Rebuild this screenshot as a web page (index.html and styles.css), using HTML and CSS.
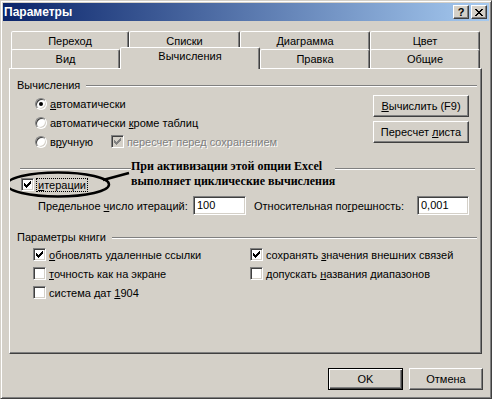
FILE: index.html
```html
<!DOCTYPE html>
<html lang="ru">
<head>
    <meta charset="UTF-8">
    <title>Параметры</title>
    <link rel="stylesheet" href="styles.css">
</head>
<body>
    <div class="window">
        <div class="titlebar">
            <span class="title">Параметры</span>
            <div class="caption-buttons">
                <span class="caption-btn">?</span>
                <span class="caption-btn">
                    <svg width="8" height="7" viewBox="0 0 8 7"><path d="M0 0h2v1h-2zM6 0h2v1h-2zM1 1h2v1h-2zM5 1h2v1h-2zM2 2h4v1h-4zM3 3h2v1h-2zM2 4h4v1h-4zM1 5h2v1h-2zM5 5h2v1h-2zM0 6h2v1h-2zM6 6h2v1h-2z"/></svg>
                </span>
            </div>
        </div>

        <div class="content">
            <div class="tab-row back">
                <div class="tab">Переход</div>
                <div class="tab">Списки</div>
                <div class="tab">Диаграмма</div>
                <div class="tab">Цвет</div>
            </div>
            <div class="tab-row front">
                <div class="tab">Вид</div>
                <div class="tab active">Вычисления</div>
                <div class="tab">Правка</div>
                <div class="tab">Общие</div>
            </div>

            <div class="panel">
                <div class="group-head">
                    <span>Вычисления</span>
                    <span class="etch"></span>
                </div>

                <div class="calc">
                    <div class="radios">
                        <div class="radio-row">
                            <span class="radio checked"><span class="dot"></span></span>
                            <span><u>а</u>втоматически</span>
                        </div>
                        <div class="radio-row">
                            <span class="radio"></span>
                            <span>автоматически <u>к</u>роме таблиц</span>
                        </div>
                        <div class="radio-row">
                            <span class="radio"></span>
                            <span>в<u>р</u>учную</span>
                            <span class="check disabled save-check">
                                <svg width="7" height="7" viewBox="0 0 7 7"><path d="M6 0h1v1h-1zM5 1h2v1h-2zM0 2h1v1h-1zM4 2h3v1h-3zM0 3h2v1h-2zM3 3h3v1h-3zM0 4h5v1h-5zM1 5h3v1h-3zM2 6h1v1h-1z"/></svg>
                            </span>
                            <span class="muted">пересчет перед сохранением</span>
                        </div>
                    </div>
                    <div class="calc-buttons">
                        <div class="btn wide"><span><u>В</u>ычислить (F9)</span></div>
                        <div class="btn wide"><span>Пересчет <u>л</u>иста</span></div>
                    </div>
                </div>

                <div class="sep"></div>

                <div class="iter-row">
                    <span class="check">
                        <svg width="7" height="7" viewBox="0 0 7 7"><path d="M6 0h1v1h-1zM5 1h2v1h-2zM0 2h1v1h-1zM4 2h3v1h-3zM0 3h2v1h-2zM3 3h3v1h-3zM0 4h5v1h-5zM1 5h3v1h-3zM2 6h1v1h-1z"/></svg>
                    </span>
                    <span class="focus-label"><u>и</u>терации</span>
                </div>

                <div class="limits-row">
                    <span class="limit-label">Предельное <u>ч</u>исло итераций:</span>
                    <span class="field short">100</span>
                    <span class="limit-label second">Относительная по<u>г</u>решность:</span>
                    <span class="field right">0,001</span>
                </div>

                <div class="group-head book">
                    <span>Параметры книги</span>
                    <span class="etch"></span>
                </div>

                <div class="book-options">
                    <div class="check-row">
                        <span class="check">
                            <svg width="7" height="7" viewBox="0 0 7 7"><path d="M6 0h1v1h-1zM5 1h2v1h-2zM0 2h1v1h-1zM4 2h3v1h-3zM0 3h2v1h-2zM3 3h3v1h-3zM0 4h5v1h-5zM1 5h3v1h-3zM2 6h1v1h-1z"/></svg>
                        </span>
                        <span><u>о</u>бновлять удаленные ссылки</span>
                    </div>
                    <div class="check-row">
                        <span class="check">
                            <svg width="7" height="7" viewBox="0 0 7 7"><path d="M6 0h1v1h-1zM5 1h2v1h-2zM0 2h1v1h-1zM4 2h3v1h-3zM0 3h2v1h-2zM3 3h3v1h-3zM0 4h5v1h-5zM1 5h3v1h-3zM2 6h1v1h-1z"/></svg>
                        </span>
                        <span>сохранять <u>з</u>начения внешних связей</span>
                    </div>
                    <div class="check-row">
                        <span class="check"></span>
                        <span><u>т</u>очность как на экране</span>
                    </div>
                    <div class="check-row">
                        <span class="check"></span>
                        <span>допускать <u>н</u>азвания диапазонов</span>
                    </div>
                    <div class="check-row">
                        <span class="check"></span>
                        <span>система дат <u>1</u>904</span>
                    </div>
                </div>

                <!-- выноска поверх вкладки -->
                <svg class="callout-marks" width="140" height="140" viewBox="0 0 140 140">
                    <ellipse cx="48" cy="115.5" rx="51" ry="12" fill="none" stroke="#000" stroke-width="2.5"/>
                    <line x1="93" y1="111" x2="119" y2="104" stroke="#000" stroke-width="2.5"/>
                </svg>
                <div class="callout-text">При активизации этой опции Excel<br>выполняет циклические вычисления</div>
            </div>

            <div class="footer">
                <div class="btn default">OK</div>
                <div class="btn cancel">Отмена</div>
            </div>
        </div>
    </div>
</body>
</html>
```

FILE: styles.css
```css
* {
    box-sizing: border-box;
}
body {
    margin: 0;
    background-color: #d4d0c8;
    font-family: "Liberation Sans", Arial, sans-serif;
    font-size: 11px;
    color: #000;
}
u {
    text-decoration: underline;
    text-underline-offset: 1px;
}
.window {
    width: 492px;
    height: 399px;
    padding: 2px;
    background-color: #d4d0c8;
    border: 1px solid;
    border-color: #d4d0c8 #404040 #404040 #d4d0c8;
    box-shadow: inset 1px 1px #fff, inset -1px -1px #808080;
}
.titlebar {
    height: 18px;
    display: flex;
    align-items: center;
    padding: 0 2px 0 1px;
    background: linear-gradient(to right, #0a246a, #a6caf0);
}
.title {
    flex: 1;
    color: #fff;
    font-weight: bold;
    font-size: 12px;
}
.caption-buttons {
    display: flex;
    gap: 2px;
}
.caption-btn {
    width: 16px;
    height: 14px;
    display: flex;
    align-items: center;
    justify-content: center;
    background-color: #d4d0c8;
    border: 1px solid;
    border-color: #fff #404040 #404040 #fff;
    box-shadow: inset -1px -1px #808080;
    font-weight: bold;
    font-size: 11px;
    line-height: 1;
}
.content {
    padding: 10px 7px 0 6px;
}

/* вкладки */
.tab-row {
    display: flex;
    height: 19px;
    margin-left: 2px;
}
.tab-row.front {
    margin-top: -1px;
}
.tab {
    padding-top: 1px;
    text-align: center;
    line-height: 17px;
    background-color: #d4d0c8;
    border: 1px solid;
    border-bottom: none;
    border-color: #fff #404040 transparent #fff;
    border-radius: 2px 2px 0 0;
    box-shadow: inset -1px 0 #808080;
}
.back .tab:nth-child(1) { width: 118px; }
.back .tab:nth-child(2) { width: 111px; }
.back .tab:nth-child(3) { width: 130px; }
.back .tab:nth-child(4) { width: 110px; }
.front .tab:nth-child(1) { width: 109px; }
.front .tab:nth-child(2) { width: 140px; }
.front .tab:nth-child(3) { width: 110px; }
.front .tab:nth-child(4) { width: 110px; }
.tab.active {
    position: relative;
    z-index: 1;
    margin-top: -2px;
    margin-bottom: -1px;
    padding-top: 0;
}

/* панель */
.panel {
    position: relative;
    height: 286px;
    padding: 9px 4px 0 7px;
    border: 1px solid;
    border-color: #fff #404040 #404040 #fff;
    box-shadow: inset -1px -1px #808080;
}
.group-head {
    display: flex;
    align-items: center;
    height: 14px;
}
.group-head.book {
    margin-top: 15px;
}
.etch {
    flex: 1;
    height: 2px;
    margin: 2px 0 0 6px;
    border-top: 1px solid #808080;
    border-bottom: 1px solid #fff;
}
.calc {
    display: flex;
    margin-top: 2px;
}
.radios {
    margin-left: 18px;
}
.radio-row {
    display: flex;
    align-items: center;
    gap: 3px;
    height: 19px;
}
.radio {
    width: 12px;
    height: 12px;
    display: flex;
    align-items: center;
    justify-content: center;
    border-radius: 50%;
    background-color: #fff;
    border: 1px solid;
    border-color: #808080 #fff #fff #808080;
    box-shadow: inset 1px 1px #404040, inset -1px -1px #d4d0c8;
}
.dot {
    width: 4px;
    height: 4px;
    border-radius: 50%;
    background-color: #000;
}
.check {
    width: 13px;
    height: 13px;
    flex: none;
    background-color: #fff;
    border: 1px solid;
    border-color: #808080 #fff #fff #808080;
    box-shadow: inset 1px 1px #404040, inset -1px -1px #d4d0c8;
}
.check svg {
    display: block;
    margin: 2px;
}
.check.disabled {
    background-color: #d4d0c8;
    fill: #808080;
}
.save-check {
    margin-left: 15px;
}
.muted {
    color: #808080;
    text-shadow: 1px 1px #fff;
}
.calc-buttons {
    margin: 1px 8px 0 auto;
    display: flex;
    flex-direction: column;
    gap: 4px;
}
.btn {
    height: 22px;
    display: flex;
    align-items: center;
    justify-content: center;
    background-color: #d4d0c8;
    border: 1px solid;
    border-color: #fff #404040 #404040 #fff;
    box-shadow: inset -1px -1px #808080;
}
.btn.wide {
    width: 96px;
}
.sep {
    height: 2px;
    margin: 17px 2px 0 3px;
    border-top: 1px solid #808080;
    border-bottom: 1px solid #fff;
}
.iter-row {
    display: flex;
    align-items: center;
    gap: 2px;
    height: 17px;
    margin: 6px 0 0 4px;
}
.focus-label {
    padding: 0 1px;
    line-height: 12px;
    border: 1px dotted #000;
}
.limits-row {
    display: flex;
    align-items: center;
    height: 19px;
    margin-top: 3px;
}
.limit-label {
    width: 155px;
    margin-left: 21px;
}
.limit-label.second {
    width: auto;
    margin-left: 8px;
}
.field {
    height: 19px;
    width: 53px;
    padding-left: 3px;
    line-height: 17px;
    background-color: #fff;
    border: 1px solid;
    border-color: #808080 #fff #fff #808080;
    box-shadow: inset 1px 1px #404040, inset -1px -1px #d4d0c8;
}
.field.right {
    width: 52px;
    margin: 0 8px 0 auto;
}
.book-options {
    display: grid;
    grid-template-columns: 217px 1fr;
    margin: 1px 0 0 16px;
}
.check-row {
    display: flex;
    align-items: center;
    gap: 3px;
    height: 19px;
}

/* выноска */
.callout-marks {
    position: absolute;
    left: 0;
    top: 0;
    pointer-events: none;
}
.callout-text {
    position: absolute;
    left: 121px;
    top: 90px;
    background-color: #d4d0c8;
    font-family: "Liberation Serif", "Times New Roman", serif;
    font-weight: bold;
    font-size: 12px;
    line-height: 15px;
}

.footer {
    display: flex;
    justify-content: flex-end;
    gap: 6px;
    margin: 14px -1px 0 0;
}
.btn.default {
    width: 75px;
    border-color: #000;
    box-shadow: inset 1px 1px #fff, inset -1px -1px #404040, inset -2px -2px #808080;
}
.btn.cancel {
    width: 74px;
}
```
